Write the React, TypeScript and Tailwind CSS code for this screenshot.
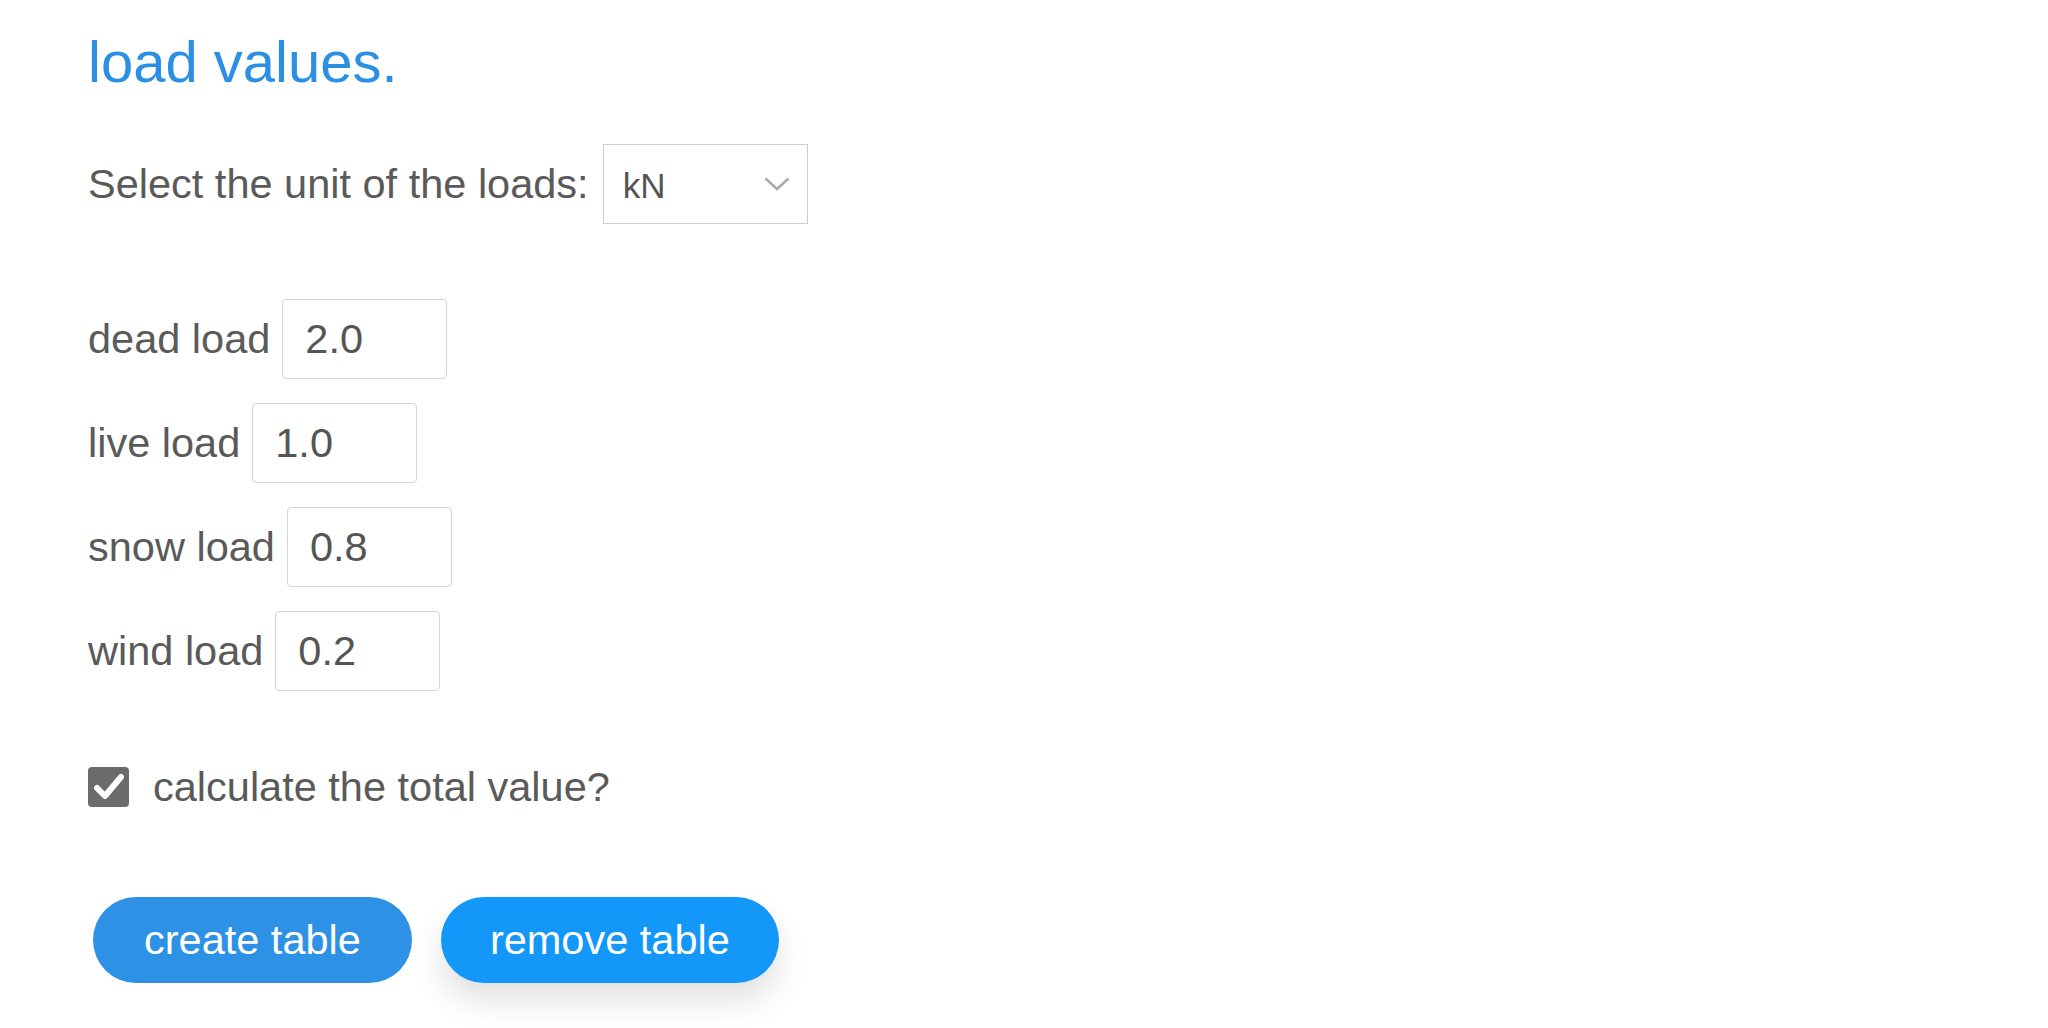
import React from 'react'

const loads = [
  { label: 'dead load', value: '2.0' },
  { label: 'live load', value: '1.0' },
  { label: 'snow load', value: '0.8' },
  { label: 'wind load', value: '0.2' },
]

function LoadRow({ label, value }: { label: string; value: string }) {
  return (
    <div className="flex items-center h-[80px]">
      <span className="text-[41.5px] text-[#5a5a5a]">{label}</span>
      <input
        defaultValue={value}
        className="ml-[12px] w-[165px] h-[80px] rounded-[4px] border border-[#d0d5da] bg-white pl-[22px] text-[41.5px] text-[#555] outline-none"
      />
    </div>
  )
}

export default function App() {
  return (
    <div
      className="min-h-screen bg-white pl-[88px] pt-[33px]"
      style={{ fontFamily: '"Liberation Sans", Arial, sans-serif' }}
    >
      <h1 className="text-[58px] leading-[58px] text-[#2b8fe3]">load values.</h1>

      <div className="mt-[53px] flex items-center h-[80px]">
        <span className="text-[41.5px] text-[#5a5a5a]">Select the unit of the loads:</span>
        <div className="ml-[14px] flex items-center justify-between w-[205px] h-[80px] border border-[#cdcdcd] bg-white pl-[19px] pr-[17px]">
          <span className="mt-[5px] text-[35px] text-[#555]">kN</span>
          <svg width="26" height="14" viewBox="0 0 26 14" fill="none">
            <path d="M1.5 1.5 L13 12 L24.5 1.5" stroke="#a8a8a8" strokeWidth="2.5" />
          </svg>
        </div>
      </div>

      <div className="mt-[75px] flex flex-col gap-[24px]">
        {loads.map((l) => (
          <LoadRow key={l.label} label={l.label} value={l.value} />
        ))}
      </div>

      <div className="mt-[76px] flex items-center h-[40px]">
        <div className="flex items-center justify-center w-[41px] h-[40px] rounded-[4px] bg-[#6b6b6b]">
          <svg width="30" height="28" viewBox="0 0 30 28" fill="none">
            <path d="M3 15 L11 23 L27 4" stroke="white" strokeWidth="6" strokeLinecap="round" strokeLinejoin="round" />
          </svg>
        </div>
        <span className="ml-[24px] text-[41.5px] text-[#5a5a5a]">calculate the total value?</span>
      </div>

      <div className="mt-[90px] flex items-center gap-[29px] ml-[5px]">
        <button className="h-[86px] px-[51px] rounded-full bg-[#2d91e6] text-[41.5px] text-white">
          create table
        </button>
        <button className="h-[86px] px-[49px] rounded-full bg-[#1397f8] text-[41.5px] text-white shadow-[0_18px_32px_rgba(0,0,0,0.12)]">
          remove table
        </button>
      </div>
    </div>
  )
}
